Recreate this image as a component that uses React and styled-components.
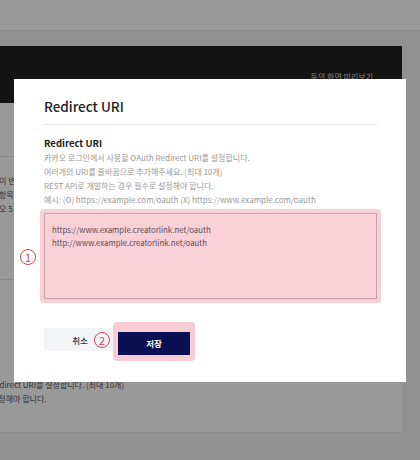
import React from "react";
import styled, { createGlobalStyle } from "styled-components";

const GlobalStyle = createGlobalStyle`
  * { box-sizing: border-box; }
  html, body { margin: 0; padding: 0; }
  body {
    font-family: "Noto Sans CJK KR", "Noto Sans", sans-serif;
    background: #f2f2f2;
  }
`;

const App = () => {
  return (
    <Stage>
      <GlobalStyle />
      <TopBar />
      <Main>
        <DarkPanel>
          <PreviewLink>동의 화면 미리보기</PreviewLink>
        </DarkPanel>
        <Card>
          <CardRow $height={54} $pad={0} />
          <CardRow $height={123} $pad={17}>
            <BgText $shift={-1}>이 변</BgText>
            <BgText $shift={-1}>항목</BgText>
            <BgText $shift={-1}>오 5</BgText>
          </CardRow>
          <CardRow $height={153} $pad={98}>
            <BgText $shift={-10}>Redirect URI를 설정합니다. (최대 10개)</BgText>
            <BgText $shift={-9}>설정해야 합니다.</BgText>
          </CardRow>
        </Card>
      </Main>

      <Overlay />

      <Modal>
        <ModalHeader>
          <ModalTitle>Redirect URI</ModalTitle>
        </ModalHeader>
        <Field>
          <FieldLabel>Redirect URI</FieldLabel>
          <Desc>
            <p>카카오 로그인에서 사용할 OAuth Redirect URI를 설정합니다.</p>
            <p>여러개의 URI를 줄바꿈으로 추가해주세요. (최대 10개)</p>
            <p>REST API로 개발하는 경우 필수로 설정해야 합니다.</p>
            <p>예시: (O) https://example.com/oauth (X) https://www.example.com/oauth</p>
          </Desc>
          <AreaMark>
            <Num $left={-20} $top={40}>1</Num>
            <UriInput
              readOnly
              defaultValue={"https://www.example.creatorlink.net/oauth\nhttp://www.example.creatorlink.net/oauth"}
            />
          </AreaMark>
        </Field>
        <Buttons>
          <Button>취소</Button>
          <ButtonMark>
            <Num $left={-19} $top={10}>2</Num>
            <Button $primary>저장</Button>
          </ButtonMark>
        </Buttons>
      </Modal>
    </Stage>
  );
};

const Stage = styled.div`
  position: relative;
  width: 420px;
  height: 460px;
  overflow: hidden;
  background: #f2f2f2;
`;

const TopBar = styled.div`
  height: 31px;
  background: #fff;
  border-bottom: 1px solid #e4e4e4;
`;

const Main = styled.div`
  padding: 15px 18px 0 0;
`;

const DarkPanel = styled.div`
  height: 57px;
  background: #222;
  display: flex;
  justify-content: flex-end;
  padding: 25px 29px 0 0;
`;

const PreviewLink = styled.span`
  font-size: 8px;
  line-height: 12px;
  color: #d6d6d6;
`;

const Card = styled.div`
  background: #fff;
`;

const CardRow = styled.div`
  height: ${({ $height }) => $height}px;
  padding-top: ${({ $pad }) => $pad}px;
  border-bottom: 1px solid #e6e6e6;
  overflow: hidden;
`;

const BgText = styled.div`
  margin-left: ${({ $shift }) => $shift}px;
  font-size: 8px;
  line-height: 14px;
  color: #555;
  white-space: nowrap;
`;

const Overlay = styled.div`
  position: absolute;
  inset: 0;
  background: rgba(0, 0, 0, 0.4);
  z-index: 1;
`;

const Modal = styled.div`
  position: absolute;
  left: 14px;
  top: 79px;
  width: 392px;
  z-index: 2;
  background: #fff;
  padding: 18px 29px 27px 30px;
`;

const ModalHeader = styled.div`
  padding-bottom: 9px;
  border-bottom: 1px solid #e6e6e6;
`;

const ModalTitle = styled.h2`
  margin: 0;
  font-size: 13.5px;
  line-height: 18px;
  font-weight: 500;
  color: #222;
`;

const Field = styled.div`
  margin-top: 10px;
`;

const FieldLabel = styled.div`
  font-size: 9.5px;
  line-height: 16px;
  font-weight: 700;
  color: #222;
`;

const Desc = styled.div`
  p {
    margin: 0;
    font-size: 8px;
    line-height: 14px;
    color: #999;
    white-space: nowrap;
  }
`;

const AreaMark = styled.div`
  position: relative;
  margin: 2px -4px 0;
  padding: 4px;
  background: #f9d0d8;
  border-radius: 4px;
`;

const UriInput = styled.textarea`
  display: block;
  width: 100%;
  height: 86px;
  resize: none;
  border: 1px solid #c9a3ab;
  background: transparent;
  padding: 9px 7px;
  font-family: "Noto Sans CJK KR", "Noto Sans", sans-serif;
  font-size: 7.8px;
  line-height: 13px;
  color: #5a4c53;
  outline: none;
`;

const Num = styled.span`
  position: absolute;
  left: ${({ $left }) => $left}px;
  top: ${({ $top }) => $top}px;
  width: 16px;
  height: 16px;
  border: 1px solid #e0404f;
  border-radius: 50%;
  display: flex;
  align-items: center;
  justify-content: center;
  font-size: 11px;
  line-height: 1;
  color: #e0404f;
`;

const Buttons = styled.div`
  margin-top: 25px;
  display: flex;
  gap: 2px;
`;

const ButtonMark = styled.div`
  position: relative;
  margin: -6px -5px;
  padding: 6px 5px;
  background: #f8ccd5;
  border-radius: 4px;
`;

const Button = styled.button`
  width: 72px;
  height: 23px;
  border: none;
  padding: 0;
  font-family: "Noto Sans CJK KR", "Noto Sans", sans-serif;
  font-size: 8.5px;
  font-weight: ${({ $primary }) => ($primary ? 700 : 500)};
  color: ${({ $primary }) => ($primary ? "#fff" : "#333")};
  background: ${({ $primary }) => ($primary ? "#0b1052" : "#f3f4f8")};
`;

export default App;
